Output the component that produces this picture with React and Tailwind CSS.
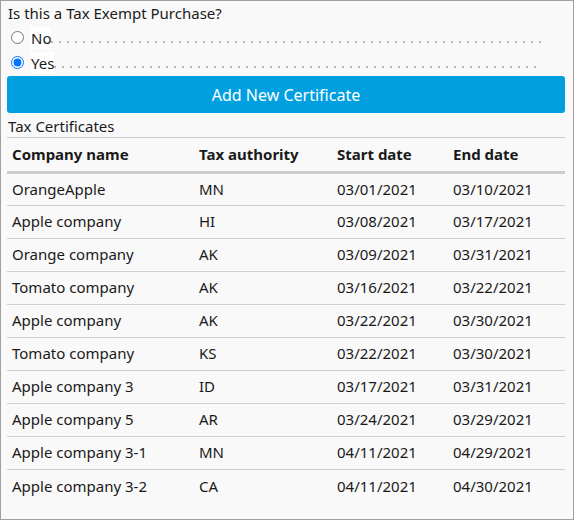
import React, { useState } from "react";

const certificates = [
  { company: "OrangeApple", authority: "MN", start: "03/01/2021", end: "03/10/2021" },
  { company: "Apple company", authority: "HI", start: "03/08/2021", end: "03/17/2021" },
  { company: "Orange company", authority: "AK", start: "03/09/2021", end: "03/31/2021" },
  { company: "Tomato company", authority: "AK", start: "03/16/2021", end: "03/22/2021" },
  { company: "Apple company", authority: "AK", start: "03/22/2021", end: "03/30/2021" },
  { company: "Tomato company", authority: "KS", start: "03/22/2021", end: "03/30/2021" },
  { company: "Apple company 3", authority: "ID", start: "03/17/2021", end: "03/31/2021" },
  { company: "Apple company 5", authority: "AR", start: "03/24/2021", end: "03/29/2021" },
  { company: "Apple company 3-1", authority: "MN", start: "04/11/2021", end: "04/29/2021" },
  { company: "Apple company 3-2", authority: "CA", start: "04/11/2021", end: "04/30/2021" },
];

function RadioRow({ label, checked, onChange }) {
  return (
    <label className="flex items-center h-[25px] pl-[4px] pr-[24px] cursor-pointer">
      <input
        type="radio"
        name="exempt"
        checked={checked}
        onChange={onChange}
        className="w-[13px] h-[13px] m-0 accent-[#0075ff]"
      />
      <span className="ml-[7px] bg-white leading-[22px]">{label}</span>
      <span className="flex-1 self-end mb-[7px] h-[2px] bg-[linear-gradient(to_right,#b8b8b8_2px,transparent_2px)] bg-[length:8px_2px] bg-repeat-x" />
    </label>
  );
}

export default function App() {
  const [exempt, setExempt] = useState(true);

  return (
    <div
      className="w-[574px] h-[520px] border border-[#a0a0a0] bg-[#f9f9f9] text-[#1a1a1a] overflow-hidden"
      style={{ fontFamily: '"Noto Sans", "Open Sans", sans-serif' }}
    >
      <div className="pl-[6px] pr-[8px] text-[15px]">
        <div className="h-[24px] leading-[24px] pl-[1px]">Is this a Tax Exempt Purchase?</div>

        <RadioRow label="No" checked={!exempt} onChange={() => setExempt(false)} />
        <RadioRow label="Yes" checked={exempt} onChange={() => setExempt(true)} />

        <button
          type="button"
          className="mt-[1px] w-full h-[37px] rounded-[3px] bg-[#00a0e0] text-white text-[16px]"
        >
          Add New Certificate
        </button>

        <div className="h-[25px] leading-[26px] pl-[1px] border-b border-[#cccccc]">
          Tax Certificates
        </div>

        <table className="w-full border-collapse text-left">
          <thead>
            <tr className="h-[34px] border-b-[3px] border-[#cccccc]">
              <th className="pl-[5px] w-[192px] font-bold">Company name</th>
              <th className="pl-0 w-[138px] font-bold">Tax authority</th>
              <th className="w-[116px] font-bold">Start date</th>
              <th className="font-bold">End date</th>
            </tr>
          </thead>
          <tbody>
            {certificates.map((c, i) => (
              <tr
                key={i}
                className={
                  i < certificates.length - 1
                    ? "h-[33px] border-b border-[#d0d0d0]"
                    : "h-[33px]"
                }
              >
                <td className="pl-[5px]">{c.company}</td>
                <td>{c.authority}</td>
                <td>{c.start}</td>
                <td>{c.end}</td>
              </tr>
            ))}
          </tbody>
        </table>
      </div>
    </div>
  );
}
